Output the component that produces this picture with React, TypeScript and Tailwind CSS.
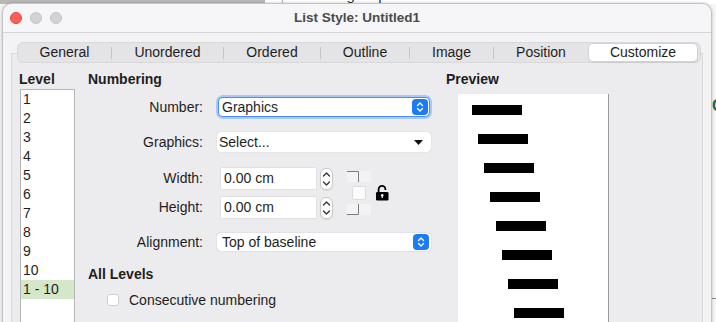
import React from 'react';

const tabs = [
  { label: 'General', w: 'w-[93px]', sep: true },
  { label: 'Unordered', w: 'w-[111px]', sep: true },
  { label: 'Ordered', w: 'w-[96px]', sep: true },
  { label: 'Outline', w: 'w-[88px]', sep: true },
  { label: 'Image', w: 'w-[83px]', sep: true },
  { label: 'Position', w: 'w-[94px]', sep: false },
];

const levels = ['1', '2', '3', '4', '5', '6', '7', '8', '9', '10', '1 - 10'];

function BlueStepper() {
  return (
    <div className="flex h-[16px] w-[16px] items-center justify-center rounded-[4px] bg-[#1b7bf5]">
      <svg width="8" height="12" viewBox="0 0 8 12">
        <path
          d="M1.5 4.6 4 2.1l2.5 2.5M1.5 7.4 4 9.9l2.5-2.5"
          stroke="white"
          strokeWidth="1.4"
          fill="none"
          strokeLinecap="round"
          strokeLinejoin="round"
        />
      </svg>
    </div>
  );
}

function SpinButton() {
  return (
    <div className="ml-[4px] flex h-[22px] w-[13px] flex-col items-center justify-between rounded-[6px] border border-[#c9c9c9] bg-white py-[2px] shadow-[0_1px_1px_rgba(0,0,0,0.08)]">
      <svg width="9" height="7" viewBox="0 0 9 7">
        <path d="M1.5 5 4.5 2l3 3" stroke="#333" strokeWidth="1.3" fill="none" strokeLinecap="round" strokeLinejoin="round" />
      </svg>
      <svg width="9" height="7" viewBox="0 0 9 7">
        <path d="M1.5 2 4.5 5l3-3" stroke="#333" strokeWidth="1.3" fill="none" strokeLinecap="round" strokeLinejoin="round" />
      </svg>
    </div>
  );
}

function ChainLock() {
  return (
    <svg width="46" height="50" viewBox="0 0 46 50" className="ml-[13px]">
      <rect x="1" y="3" width="24" height="11" fill="#f3f2f4" />
      <path d="M1 3.5H12.5V14" stroke="#7c7c7c" strokeWidth="1" fill="none" />
      <rect x="6.5" y="18.5" width="13" height="13" rx="2" fill="#fbfbfb" stroke="#dcdcdc" />
      {/* open padlock */}
      <path d="M32.6 24.5V21.2a3.4 3.4 0 0 1 6.8 0v0.9" stroke="black" strokeWidth="1.8" fill="none" />
      <rect x="30" y="24" width="12.5" height="8.5" rx="1.3" fill="black" />
      <circle cx="36.25" cy="27.2" r="1.2" fill="white" />
      <rect x="35.65" y="27.4" width="1.2" height="2.6" fill="white" />
      <rect x="1" y="36" width="24" height="11" fill="#f3f2f4" />
      <path d="M12.5 36V46.5H1" stroke="#7c7c7c" strokeWidth="1" fill="none" />
    </svg>
  );
}

function PreviewBars() {
  const bars = [0, 1, 2, 3, 4, 5, 6, 7];
  return (
    <svg width="150" height="240" viewBox="0 0 150 240">
      {bars.map((i) => (
        <rect key={i} x={14 + i * 6} y={11 + i * 29} width="50" height="10" fill="black" />
      ))}
    </svg>
  );
}

export default function App() {
  return (
    <div className="relative h-[322px] w-[716px] overflow-hidden bg-[#f5f5f5] font-['Liberation_Sans',Arial,sans-serif] text-[14px] text-[#1e1e1e]">
      {/* desktop behind the dialog */}
      <div className="absolute left-0 top-0 flex h-[4px] w-[716px]">
        <div className="h-full w-[265px] bg-[#b9b9b9]" />
        <div className="relative h-full flex-1 overflow-hidden bg-white">
          <div className="absolute left-[17px] top-0 h-full w-px bg-[#b0b0b0]" />
          <span className="absolute left-[34px] top-[-13px] text-[15px] leading-[16px] text-[#333]">Heading Caption</span>
        </div>
      </div>
      <div className="absolute left-[712px] top-[98px] text-[16px] font-bold leading-[16px] text-[#1d6b3c]">C</div>
      <div className="absolute left-[712px] top-[298px] h-px w-[4px] bg-[#8a8a8a]" />

      {/* dialog window */}
      <div className="absolute left-[2px] top-[3px] h-[330px] w-[710px] overflow-hidden rounded-t-[10px] border border-[#c4c4c4] bg-[#f3f2f4] shadow-[0_0_3px_rgba(0,0,0,0.25)]">
        <div className="relative flex h-[29px] items-center border-b border-[#d6d5d7] bg-[#f6f5f7]">
          <div className="ml-[7px] flex gap-[8px]">
            <div className="h-[12px] w-[12px] rounded-full border border-[#e2463e] bg-[#fe5f57]" />
            <div className="h-[12px] w-[12px] rounded-full border border-[#c4c3c5] bg-[#d3d2d4]" />
            <div className="h-[12px] w-[12px] rounded-full border border-[#c4c3c5] bg-[#d3d2d4]" />
          </div>
          <div className="absolute inset-x-0 top-[5px] text-center text-[13.5px] font-bold leading-[17px] text-[#4b4b4b]">
            List Style: Untitled1
          </div>
        </div>

        <div className="px-[8px] pt-[9px]">
          <div className="relative z-10 ml-[6px] mr-[2px] flex h-[21px] items-center rounded-[6px] border border-[#d9d8da] bg-[#e4e3e5] pr-[2px]">
            {tabs.map((t) => (
              <React.Fragment key={t.label}>
                <div className={`${t.w} text-center leading-[19px]`}>{t.label}</div>
                {t.sep && <div className="h-[12px] w-px bg-[#c6c5c7]" />}
              </React.Fragment>
            ))}
            <div className="h-[19px] w-[110px] rounded-[5px] border border-[#d2d2d2] bg-white text-center leading-[17px] shadow-[0_1px_1px_rgba(0,0,0,0.06)]">
              Customize
            </div>
          </div>

          <div className="mt-[-10px] flex h-[300px] border border-[#d9d8da] bg-[#ecebed] pl-[8px] pt-[17px]">
            {/* Level */}
            <div className="w-[55px]">
              <div className="-ml-[1px] text-[14px] font-bold leading-[17px]">Level</div>
              <div className="mt-[1px] h-[260px] border border-[#b5b5b5] bg-white">
                {levels.map((l) => (
                  <div
                    key={l}
                    className={`h-[19px] pl-[2px] leading-[19px] ${l === '1 - 10' ? 'bg-[#d4e7c9]' : ''}`}
                  >
                    {l}
                  </div>
                ))}
              </div>
            </div>

            {/* Numbering */}
            <div className="ml-[13px] w-[344px]">
              <div className="font-bold leading-[17px]">Numbering</div>

              <div className="mt-[8px] flex h-[22px] items-center">
                <span className="w-[115px] text-right">Number:</span>
                <div className="ml-[16px] flex h-[18px] w-[210px] items-center justify-between rounded-[4px] bg-white pl-[3px] pr-[1px] shadow-[0_0_0_1px_#4a8ff0,0_0_0_3px_#a8c9f6]">
                  <span className="leading-[18px]">Graphics</span>
                  <BlueStepper />
                </div>
              </div>

              <div className="mt-[14px] flex h-[20px] items-center">
                <span className="w-[115px] text-right">Graphics:</span>
                <div className="ml-[14px] flex h-[20px] w-[214px] items-center justify-between rounded-[4px] bg-white pl-[2px] pr-[8px] shadow-[0_0_1px_rgba(0,0,0,0.3)]">
                  <span className="leading-[20px]">Select...</span>
                  <svg width="9" height="5" viewBox="0 0 9 5">
                    <path d="M0 0h9L4.5 5z" fill="#111" />
                  </svg>
                </div>
              </div>

              <div className="mt-[16px] flex">
                <div>
                  <div className="flex h-[21px] items-center">
                    <span className="w-[115px] text-right">Width:</span>
                    <div className="ml-[18px] h-[21px] w-[95px] bg-white pl-[3px] leading-[21px] shadow-[0_0_1px_rgba(0,0,0,0.25)]">0.00 cm</div>
                    <SpinButton />
                  </div>
                  <div className="mt-[8px] flex h-[21px] items-center">
                    <span className="w-[115px] text-right">Height:</span>
                    <div className="ml-[18px] h-[21px] w-[95px] bg-white pl-[3px] leading-[21px] shadow-[0_0_1px_rgba(0,0,0,0.25)]">0.00 cm</div>
                    <SpinButton />
                  </div>
                </div>
                <ChainLock />
              </div>

              <div className="mt-[15px] flex h-[18px] items-center">
                <span className="w-[115px] text-right">Alignment:</span>
                <div className="ml-[14px] flex h-[18px] w-[214px] items-center justify-between rounded-[4px] bg-white pl-[5px] pr-[2px] shadow-[0_0_1px_rgba(0,0,0,0.35)]">
                  <span className="leading-[18px]">Top of baseline</span>
                  <BlueStepper />
                </div>
              </div>

              <div className="mt-[15px] font-bold leading-[17px]">All Levels</div>
              <div className="mt-[9px] flex h-[16px] items-center pl-[19px]">
                <div className="h-[12px] w-[12px] rounded-[3px] border border-[#cfcfcf] bg-white" />
                <span className="ml-[10px] leading-[16px]">Consecutive numbering</span>
              </div>
            </div>

            {/* Preview */}
            <div className="ml-[14px]">
              <div className="font-bold leading-[17px]">Preview</div>
              <div className="ml-[12px] mt-[6px] h-[240px] w-[151px] border-r border-[#9a9a9a] bg-white">
                <PreviewBars />
              </div>
            </div>
          </div>
        </div>
      </div>
    </div>
  );
}
